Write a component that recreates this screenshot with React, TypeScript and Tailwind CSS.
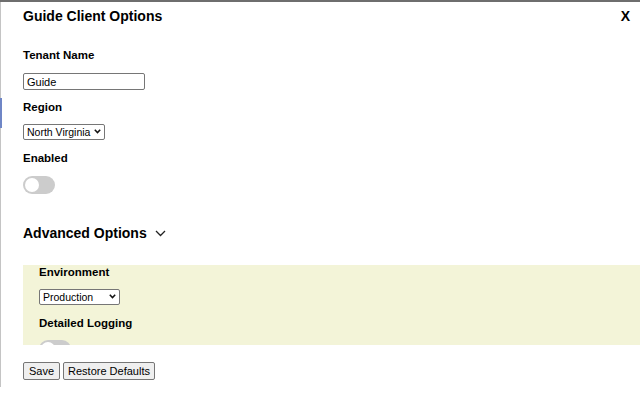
import { useState } from 'react';

function Toggle({ on, onChange }: { on: boolean; onChange: (v: boolean) => void }) {
  return (
    <button
      onClick={() => onChange(!on)}
      className={`relative block h-[18px] w-[32px] rounded-full ${on ? 'bg-[#2196f3]' : 'bg-[#cccccc]'}`}
    >
      <span
        className={`absolute top-[2px] h-[14px] w-[14px] rounded-full bg-white ${on ? 'left-[16px]' : 'left-[2px]'}`}
      />
    </button>
  );
}

function Select({
  width,
  value,
  options,
}: {
  width: string;
  value: string;
  options: { value: string; label: string }[];
}) {
  const [v, setV] = useState(value);
  return (
    <div className={`relative h-[16px] ${width}`}>
      <select
        value={v}
        onChange={(e) => setV(e.target.value)}
        className="block h-[16px] w-full appearance-none rounded-[2px] border border-[#767676] bg-white pl-[3px] pr-[12px] text-[10.5px] leading-[14px] text-black outline-none"
      >
        {options.map((o) => (
          <option key={o.value} value={o.value}>
            {o.label}
          </option>
        ))}
      </select>
      <svg
        className="pointer-events-none absolute right-[4px] top-[5px]"
        width="7"
        height="5"
        viewBox="0 0 7 5"
        fill="none"
      >
        <polyline points="0.8,0.8 3.5,3.6 6.2,0.8" stroke="#111" strokeWidth="1.5" />
      </svg>
    </div>
  );
}

export default function App() {
  const [tenant, setTenant] = useState('Guide');
  const [enabled, setEnabled] = useState(false);
  const [logging, setLogging] = useState(false);
  const [open, setOpen] = useState(true);

  const label = 'block text-[11.5px] font-bold leading-[14px] text-black';

  return (
    <div
      className="relative h-[400px] w-[640px] overflow-hidden border-t-2 border-[#6e6e6e] bg-white"
      style={{ fontFamily: '"Liberation Sans", Arial, sans-serif' }}
    >
      {/* window edge on the left */}
      <div className="absolute left-0 top-0 h-[385px] w-[1px] bg-[#c4c4c4]" />
      <div className="absolute left-0 top-[96px] h-[30px] w-[2px] bg-[#6f86c6]" />

      <div className="pl-[23px]">
        {/* Header */}
        <div className="mt-[6px] flex h-[16px] items-center justify-between pr-[10px]">
          <h1 className="text-[14px] font-bold leading-[16px]">Guide Client Options</h1>
          <button className="text-[14px] font-bold leading-[16px]">X</button>
        </div>

        <label className={`${label} mt-[24px]`}>Tenant Name</label>
        <input
          value={tenant}
          onChange={(e) => setTenant(e.target.value)}
          className="mt-[11px] block h-[17px] w-[122px] rounded-[2px] border border-[#767676] bg-white px-[3px] text-[11px] leading-[14px] text-black outline-none"
        />

        <label className={`${label} mt-[10px]`}>Region</label>
        <div className="mt-[10px]">
          <Select
            width="w-[82px]"
            value="us-east-1"
            options={[
              { value: 'us-east-1', label: 'North Virginia' },
              { value: 'eu-west-1', label: 'Ireland' },
            ]}
          />
        </div>

        <label className={`${label} mt-[11px]`}>Enabled</label>
        <div className="mt-[11px]">
          <Toggle on={enabled} onChange={setEnabled} />
        </div>

        {/* Advanced */}
        <button
          onClick={() => setOpen(!open)}
          className="mt-[31px] flex h-[16px] items-center gap-[8px] text-[14px] font-bold leading-[16px]"
        >
          Advanced Options
          <svg width="11" height="7" viewBox="0 0 11 7" fill="none">
            <polyline points="1,1 5.5,5.5 10,1" stroke="#222" strokeWidth="1.3" />
          </svg>
        </button>

        {open && (
          <div className="mt-[24px] h-[80px] overflow-hidden bg-[#f3f4d8] pl-[16px]">
            <label className={label}>Environment</label>
            <div className="mt-[10px]">
              <Select
                width="w-[81px]"
                value="prod"
                options={[
                  { value: 'prod', label: 'Production' },
                  { value: 'stage', label: 'Staging' },
                ]}
              />
            </div>
            <label className={`${label} mt-[11px]`}>Detailed Logging</label>
            <div className="mt-[10px]">
              <Toggle on={logging} onChange={setLogging} />
            </div>
          </div>
        )}

        {/* Footer buttons */}
        <div className="mt-[17px] flex gap-[3px]">
          <button className="h-[18px] w-[37px] rounded-[2px] border border-[#767676] bg-[#efefef] text-[11px] leading-[14px]">
            Save
          </button>
          <button className="h-[18px] w-[92px] rounded-[2px] border border-[#767676] bg-[#efefef] text-[11px] leading-[14px]">
            Restore Defaults
          </button>
        </div>
      </div>
    </div>
  );
}
